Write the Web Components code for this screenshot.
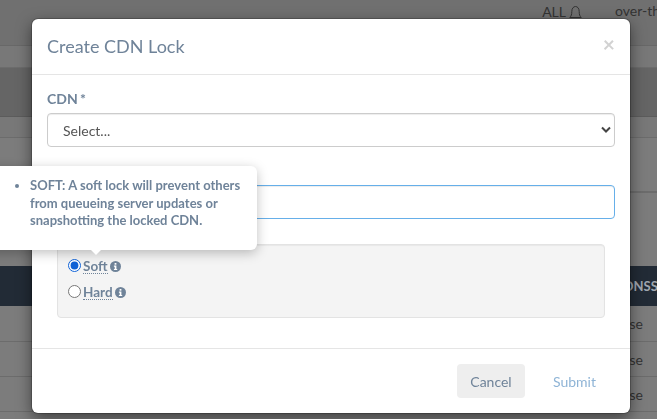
<!DOCTYPE html>
<html>
<head>
<meta charset="utf-8">
<title>Create CDN Lock</title>
<style>
  html, body { margin: 0; height: 100%; overflow: hidden; }
  body { font-family: Lato, "Liberation Sans", sans-serif; }
</style>
</head>
<body>
<page-backdrop></page-backdrop>
<lock-modal heading="Create CDN Lock">
  <form-field label="CDN *"><select-box placeholder="Select..."></select-box></form-field>
  <form-field><text-box></text-box></form-field>
  <lock-types>
    <lock-radio label="Soft" checked></lock-radio>
    <lock-radio label="Hard"></lock-radio>
  </lock-types>
  <info-tip>SOFT: A soft lock will prevent others from queueing server updates or snapshotting the locked CDN.</info-tip>
</lock-modal>

<script>
class PageBackdrop extends HTMLElement {
  constructor() {
    super()
    this.attachShadow({ mode: 'open' })
    this.shadowRoot.innerHTML = `
      <style>
        :host { display: block; height: 419px; background: #7c7c7c; color: #333; overflow: hidden; }
        .top { height: 46px; background: #707070; display: flex; justify-content: flex-end; align-items: flex-start; gap: 33px; box-sizing: border-box; border-bottom: 1px solid #686868; font-size: 14px; white-space: nowrap; padding-top: 2px; }
        .all { display: flex; align-items: center; gap: 3px; height: 18px; }
        .all svg { margin-top: 3px; }
        .user { width: 42px; overflow: hidden; line-height: 18px; }
        .row { border-bottom: 1px solid #6c6c6c; box-sizing: border-box; background: #787878; }
        .band { background: #656565; border-bottom-color: #5c5c5c; }
        .head { height: 40px; background: #222b36; color: #a0a7b0; font-size: 13px; font-weight: 700; display: flex; align-items: center; padding-left: 623px; white-space: nowrap; overflow: hidden; }
        .cell { height: 35px; display: flex; align-items: center; justify-content: flex-end; padding-right: 14px; font-size: 14px; color: #333; background: #7c7c7c; }
      </style>
      <div class="top">
        <span class="all">ALL
          <svg width="13" height="16" viewBox="0 0 13 16" fill="none" stroke="#333" stroke-width="1"><path d="M.8 12.500c1.500-1.500 2-3 2-6C2.800 3.500 4.400 1.500 6.500 1.500s3.700 2 3.700 5c0 3 .5 4.500 2 6z"/><path d="M5 14a1.500 1.500 0 0 0 3 0" fill="#333"/></svg>
        </span>
        <span class="user">over-the-top</span>
      </div>
      <div class="row" style="height:22px"></div>
      <div class="row band" style="height:49px"></div>
      <div class="row" style="height:21px"></div>
      <div class="row" style="height:55px;background:#7c7c7c;border-bottom-width:2px"></div>
      <div class="row" style="height:73px;background:#7c7c7c;border:0"></div>
      <div class="head"><span>ONSS</span></div>
      <div class="row cell" style="height:36px">se</div>
      <div class="row cell">se</div>
      <div class="row cell">se</div>
    `
  }
}

class LockModal extends HTMLElement {
  constructor() {
    super()
    this.attachShadow({ mode: 'open' })
    this.shadowRoot.innerHTML = `
      <style>
        :host { position: fixed; left: 32px; top: 19px; width: 598px; height: 394px; background: #fff; border-radius: 6px; box-shadow: 0 5px 15px rgba(0,0,0,.5), 0 0 0 1px rgba(0,0,0,.2); display: flex; flex-direction: column; color: #6f8399; font-size: 14px; }
        header { height: 56px; box-sizing: border-box; border-bottom: 1px solid #e5e5e5; display: flex; align-items: center; justify-content: space-between; padding: 0 15px; }
        h4 { margin: -2px 0 0; font-size: 18px; font-weight: 400; color: #6f8399; }
        .close { font-size: 21px; font-weight: 700; color: #d2d2d2; line-height: 1; margin-top: -6px; }
        main { flex: 1; padding: 14px 15px 0; }
        footer { height: 65px; box-sizing: border-box; border-top: 1px solid #e5e5e5; display: flex; align-items: center; justify-content: flex-end; padding: 0 14px 0 0; gap: 8px; }
        button { font: inherit; border: 0; border-radius: 4px; height: 34px; width: 68px; cursor: pointer; background: #eee; color: #6f8399; }
        button.submit { background: none; color: #8fb4d6; width: 83px; }
      </style>
      <header><h4></h4><span class="close">×</span></header>
      <main><slot></slot></main>
      <footer><button>Cancel</button><button class="submit">Submit</button></footer>
    `
    this.shadowRoot.querySelector('h4').textContent = this.getAttribute('heading')
  }
}

class FormField extends HTMLElement {
  constructor() {
    super()
    this.attachShadow({ mode: 'open' })
    this.shadowRoot.innerHTML = `
      <style>
        :host { display: block; margin-bottom: 14px; }
        label { display: block; font-weight: 700; font-size: 14px; margin-bottom: 4px; min-height: 20px; line-height: 20px; color: #6f8399; word-spacing: -1px; }
      </style>
      <label></label><slot></slot>
    `
    this.shadowRoot.querySelector('label').textContent = this.getAttribute('label') || ''
  }
}

class SelectBox extends HTMLElement {
  constructor() {
    super()
    this.attachShadow({ mode: 'open' })
    this.shadowRoot.innerHTML = `
      <style>
        :host { display: flex; height: 34px; box-sizing: border-box; border: 1px solid #ccc; border-radius: 4px; align-items: center; justify-content: space-between; padding: 0 3px 0 15px; font-size: 14px; color: #555; box-shadow: inset 0 1px 1px rgba(0,0,0,.075); }
      </style>
      <span></span>
      <svg width="10" height="8" viewBox="0 0 10 8" fill="none" stroke="#444" stroke-width="2"><path d="M1 1.500l4 4 4-4"/></svg>
    `
    this.shadowRoot.querySelector('span').textContent = this.getAttribute('placeholder')
  }
}

class TextBox extends HTMLElement {
  constructor() {
    super()
    this.attachShadow({ mode: 'open' })
    this.shadowRoot.innerHTML = `
      <style>
        :host { display: block; height: 34px; box-sizing: border-box; border: 1px solid #66afe9; border-radius: 4px; box-shadow: inset 0 1px 1px rgba(0,0,0,.075); }
      </style>
    `
  }
}

class LockTypes extends HTMLElement {
  constructor() {
    super()
    this.attachShadow({ mode: 'open' })
    this.shadowRoot.innerHTML = `
      <style>
        :host { display: flex; flex-direction: column; gap: 8px; margin: 25px 10px 0; height: 74px; box-sizing: border-box; background: #f4f4f4; border: 1px solid #e3e3e3; border-radius: 4px; padding: 11px 10px 0; box-shadow: inset 0 1px 1px rgba(0,0,0,.05); }
      </style>
      <slot></slot>
    `
  }
}

class LockRadio extends HTMLElement {
  constructor() {
    super()
    this.attachShadow({ mode: 'open' })
    this.shadowRoot.innerHTML = `
      <style>
        :host { display: flex; align-items: center; gap: 2px; height: 18px; font-weight: 700; font-size: 13.500px; color: #6f8399; }
        input { margin: 0; width: 13px; height: 13px; accent-color: #0f62d6; }
        .txt { border-bottom: 1px dotted #6f8399; line-height: 14px; margin-top: 3px; }
        svg { margin: 3px 0 0 0; }
      </style>
      <input type="radio" name="t">
      <span class="txt"></span>
      <svg width="11" height="11" viewBox="0 0 11 11"><circle cx="5.500" cy="5.500" r="5.500" fill="#6f8399"/><rect x="4.600" y="2" width="1.800" height="1.700" fill="#fff"/><path d="M3.900 4.600h2.500v3.300h.8V9H3.900V7.900h.8V5.700h-.8z" fill="#fff"/></svg>
    `
    this.shadowRoot.querySelector('.txt').textContent = this.getAttribute('label')
    this.shadowRoot.querySelector('input').checked = this.hasAttribute('checked')
  }
}

class InfoTip extends HTMLElement {
  constructor() {
    super()
    this.attachShadow({ mode: 'open' })
    this.shadowRoot.innerHTML = `
      <style>
        :host { position: fixed; left: -20px; top: 166px; width: 277px; height: 84px; box-sizing: border-box; background: #fff; border-radius: 6px; box-shadow: 0 3px 12px rgba(0,0,0,.25); font-size: 13px; font-weight: 700; line-height: 17.600px; color: #6f8399; }
        ul { margin: 0; padding: 11px 14px 0 50px; }
        .arrow { position: absolute; left: 110px; bottom: -5px; width: 0; height: 0; border: 6px solid transparent; border-bottom: 0; border-top-color: #fff; }
      </style>
      <ul><li><slot></slot></li></ul>
      <span class="arrow"></span>
    `
  }
}

customElements.define('page-backdrop', PageBackdrop)
customElements.define('lock-modal', LockModal)
customElements.define('form-field', FormField)
customElements.define('select-box', SelectBox)
customElements.define('text-box', TextBox)
customElements.define('lock-types', LockTypes)
customElements.define('lock-radio', LockRadio)
customElements.define('info-tip', InfoTip)
</script>
</body>
</html>
